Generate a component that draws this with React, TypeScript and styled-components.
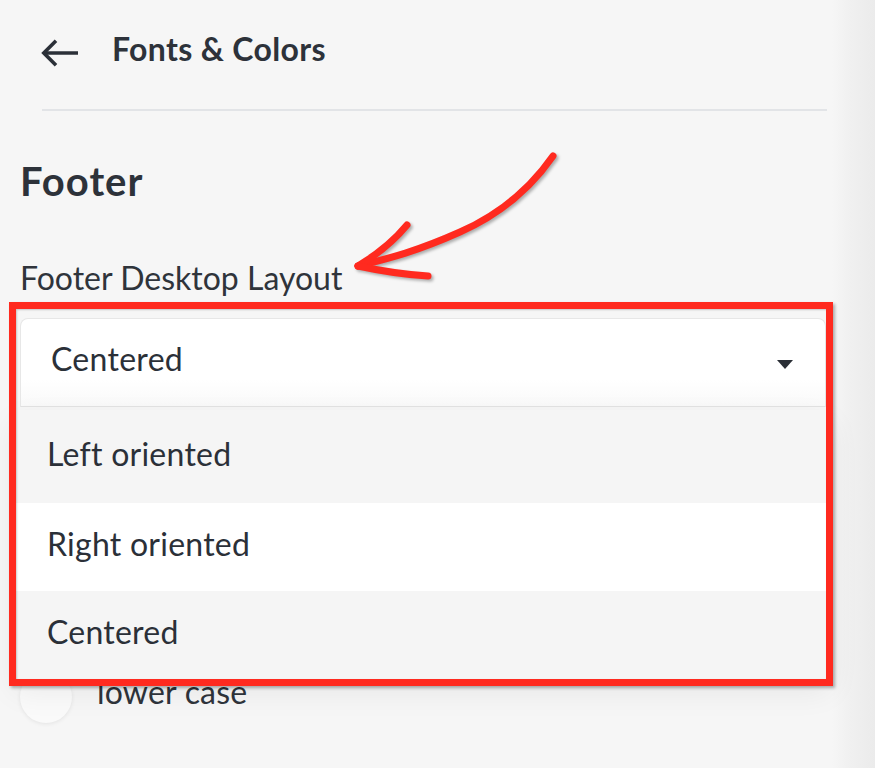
import React from "react"
import styled, { createGlobalStyle } from "styled-components"

const GlobalStyle = createGlobalStyle`
    * {
        box-sizing: border-box;
    }

    body {
        margin: 0;
        background-color: #ededed;
        font-family: "Lato", "Noto Sans", sans-serif;
        color: #2b3038;
    }
`

const Page = styled.div`
    width: 875px;
    height: 768px;
    overflow: hidden;
    background: linear-gradient(to right, #f6f6f6 0, #f6f6f6 832px, #f0f0f0 850px, #ebebeb 875px);
`

const Panel = styled.div`
    position: relative;
    width: 838px;
    height: 768px;
    padding-top: 26px;
`

// Header
const Header = styled.div`
    height: 46px;
    padding-left: 41px;

    display: flex;
    flex-flow: row nowrap;
    align-items: center;
    gap: 33px;
`

const BackButton = styled.button`
    width: 38px;
    height: 28px;
    padding: 0;
    margin-top: 8px;
    border: none;
    background: transparent;
    cursor: pointer;

    display: flex;
    align-items: center;
    justify-content: center;

    svg {
        display: block;
    }
`

const Title = styled.h1`
    margin: 0;
    font-size: 32px;
    line-height: 46px;
    font-weight: 700;
    letter-spacing: 0.35px;
    color: #2d323a;
`

const Divider = styled.hr`
    height: 2px;
    margin: 37px 11px 0 42px;
    border: none;
    background-color: #e2e4e7;
`

// Section
const Section = styled.section`
    padding: 0 12px 0 20px;
`

const SectionTitle = styled.h2`
    margin: 46px 0 0;
    font-size: 40px;
    line-height: 48px;
    font-weight: 700;
    letter-spacing: 1px;
    color: #2d323a;
`

const FieldLabel = styled.div`
    margin-top: 53px;
    font-size: 32px;
    line-height: 40px;
    font-weight: 400;
    color: #2f343b;
`

// Select
const SelectWrap = styled.div`
    position: relative;
    margin-top: 20px;
    z-index: 2;
`

const SelectBox = styled.div`
    height: 89px;
    padding: 0 32px 0 30px;
    border: 1px solid #e7e7e7;
    border-bottom-color: #e2e2e2;
    border-radius: 8px 8px 0 0;
    background: linear-gradient(to bottom, #ffffff 0, #ffffff 70%, #f9f9f9 100%);

    display: flex;
    flex-flow: row nowrap;
    align-items: center;
    justify-content: space-between;

    span {
        padding-bottom: 9px;
        font-size: 32px;
        letter-spacing: 0.3px;
        color: #2b3038;
    }
`

const Caret = styled.i`
    width: 0;
    height: 0;
    margin-top: 4px;
    border-left: 8px solid transparent;
    border-right: 8px solid transparent;
    border-top: 9px solid #2a2e35;
`

const Menu = styled.ul`
    position: absolute;
    top: calc(100% + 3px);
    left: -6px;
    right: -4px;
    margin: 0;
    padding: 0;
    list-style: none;
    background-color: #ffffff;
    box-shadow: 0 12px 30px rgba(0, 0, 0, 0.07);
`

const MenuItem = styled.li<{ $shaded?: boolean; $height: number }>`
    height: ${props => props.$height}px;
    padding: 0 0 7px 33px;
    background-color: ${props => (props.$shaded ? "#f5f5f5" : "#ffffff")};
    font-size: 32px;
    letter-spacing: 0.25px;
    color: #2b3038;

    display: flex;
    align-items: center;
`

// Radio options (the ones above sit behind the open menu)
const RadioList = styled.div`
    margin-top: 264px;

    display: flex;
    flex-flow: column;
    gap: 24px;
`

const RadioRow = styled.label`
    height: 52px;

    display: flex;
    flex-flow: row nowrap;
    align-items: center;
    gap: 25px;

    span {
        padding-bottom: 12px;
        font-size: 32px;
        letter-spacing: 0.2px;
        color: #2f343b;
    }
`

const RadioDot = styled.i`
    width: 52px;
    height: 52px;
    border-radius: 50%;
    background-color: #fafafa;
    box-shadow: 0 1px 4px rgba(0, 0, 0, 0.08);
`

// Annotation overlays
const RedFrame = styled.div`
    position: absolute;
    top: -16px;
    left: -11px;
    right: -7px;
    height: 384px;
    border: 7px solid #ff2a1f;
    box-shadow: 2px 2px 3px rgba(0, 0, 0, 0.3), inset 1px 1px 2px rgba(0, 0, 0, 0.2);
    pointer-events: none;
`

const ArrowLayer = styled.svg`
    position: absolute;
    top: 0;
    left: 0;
    width: 875px;
    height: 768px;
    pointer-events: none;
    filter: drop-shadow(2px 2px 1.5px rgba(0, 0, 0, 0.3));
    z-index: 3;
`

const options = [
    { label: "Left oriented", height: 93, shaded: true },
    { label: "Right oriented", height: 88, shaded: false },
    { label: "Centered", height: 88, shaded: true }
]

export default function App() {
    return (
        <>
            <GlobalStyle />
            <Page>
                <Panel>
                    <Header>
                        <BackButton aria-label="Back">
                            <svg width="38" height="28" viewBox="0 0 38 28" fill="none">
                                <path d="M37 14H3.5" stroke="#2b3038" strokeWidth="3.6" />
                                <path d="M15 1.8L2.8 14L15 26.2" stroke="#2b3038" strokeWidth="3.6" />
                            </svg>
                        </BackButton>
                        <Title>Fonts &amp; Colors</Title>
                    </Header>
                    <Divider />

                    <Section>
                        <SectionTitle>Footer</SectionTitle>
                        <FieldLabel>Footer Desktop Layout</FieldLabel>

                        <SelectWrap>
                            <SelectBox>
                                <span>Centered</span>
                                <Caret />
                            </SelectBox>
                            <Menu>
                                {options.map(option => (
                                    <MenuItem key={option.label} $shaded={option.shaded} $height={option.height}>
                                        {option.label}
                                    </MenuItem>
                                ))}
                            </Menu>
                            <RedFrame />
                        </SelectWrap>

                        <RadioList>
                            <RadioRow>
                                <RadioDot />
                                <span>lower case</span>
                            </RadioRow>
                        </RadioList>
                    </Section>

                    <ArrowLayer viewBox="0 0 875 768">
                        <g stroke="#ff2a1f" strokeWidth="7" strokeLinecap="round" strokeLinejoin="round" fill="none">
                            <path d="M553 156 C 535 182, 505 212, 460 232 S 390 258, 358 266" />
                            <path d="M407 225 Q 388 248, 358 266" />
                            <path d="M358 266 Q 395 274, 428 276" />
                        </g>
                    </ArrowLayer>
                </Panel>
            </Page>
        </>
    )
}
